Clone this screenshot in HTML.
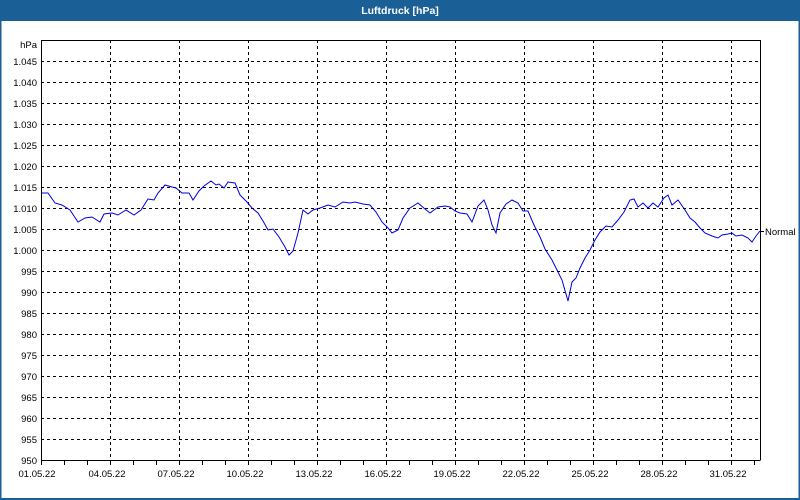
<!DOCTYPE html>
<html><head><style>
html,body{margin:0;padding:0;width:800px;height:500px;overflow:hidden;background:#fff;font-family:"Liberation Sans",sans-serif}
</style></head><body>
<svg width="800" height="500" xmlns="http://www.w3.org/2000/svg" font-family="Liberation Sans, sans-serif" font-size="9.5">
<rect x="0" y="0" width="800" height="500" fill="#fff"/>
<rect x="0" y="0" width="800" height="21" fill="#1b5f97"/>
<rect x="0" y="0" width="1.5" height="500" fill="#1b5f97"/>
<rect x="798.5" y="0" width="1.5" height="500" fill="#1b5f97"/>
<rect x="0" y="498" width="800" height="2" fill="#1b5f97"/>
<text x="400" y="14" fill="#fff" font-weight="bold" font-size="10.5" text-anchor="middle">Luftdruck [hPa]</text>
<g stroke="#000" stroke-width="1" stroke-dasharray="3,3" fill="none">
<path d="M41 61.5H760M41 82.5H760M41 103.5H760M41 124.5H760M41 145.5H760M41 166.5H760M41 187.5H760M41 208.5H760M41 229.5H760M41 250.5H760M41 271.5H760M41 292.5H760M41 313.5H760M41 334.5H760M41 355.5H760M41 376.5H760M41 397.5H760M41 418.5H760M41 439.5H760"/>
<path d="M110.5 40V460M179.5 40V460M248.5 40V460M317.5 40V460M386.5 40V460M455.5 40V460M524.5 40V460M593.5 40V460M662.5 40V460M731.5 40V460"/>
</g>
<g stroke="#000" stroke-width="1" fill="none">
<path d="M41.5 40V465M41 40.5H760.5M760.5 40V460M41 460.5H760.5"/>
<path d="M64.5 460V465M87.5 460V465M110.5 460V465M133.5 460V465M156.5 460V465M179.5 460V465M202.5 460V465M225.5 460V465M248.5 460V465M271.5 460V465M294.5 460V465M317.5 460V465M340.5 460V465M363.5 460V465M386.5 460V465M409.5 460V465M432.5 460V465M455.5 460V465M478.5 460V465M501.5 460V465M524.5 460V465M547.5 460V465M570.5 460V465M593.5 460V465M616.5 460V465M639.5 460V465M662.5 460V465M685.5 460V465M708.5 460V465M731.5 460V465M754.5 460V465"/>
<path d="M760 231.5H764"/>
</g>
<g fill="#000" text-anchor="end">
<text x="37" y="48">hPa</text>
<text x="37" y="65">1.045</text><text x="37" y="86">1.040</text><text x="37" y="107">1.035</text><text x="37" y="128">1.030</text><text x="37" y="149">1.025</text><text x="37" y="170">1.020</text><text x="37" y="191">1.015</text><text x="37" y="212">1.010</text><text x="37" y="233">1.005</text><text x="37" y="254">1.000</text><text x="37" y="275">995</text><text x="37" y="296">990</text><text x="37" y="317">985</text><text x="37" y="338">980</text><text x="37" y="359">975</text><text x="37" y="380">970</text><text x="37" y="401">965</text><text x="37" y="422">960</text><text x="37" y="443">955</text><text x="37" y="464">950</text>
</g>
<g fill="#000" text-anchor="middle">
<text x="37" y="477">01.05.22</text><text x="107" y="477">04.05.22</text><text x="176" y="477">07.05.22</text><text x="245" y="477">10.05.22</text><text x="314" y="477">13.05.22</text><text x="383" y="477">16.05.22</text><text x="452" y="477">19.05.22</text><text x="521" y="477">22.05.22</text><text x="590" y="477">25.05.22</text><text x="659" y="477">28.05.22</text><text x="728" y="477">31.05.22</text>
</g>
<text x="765" y="235" fill="#000">Normal</text>
<polyline fill="none" stroke="#0000e0" stroke-width="1" points="41,193 48,193 55,203 62,205 70,210 78,222 85,218 92,217 100,222 104,214 112,213 118,215 126,210 134,215 141,210 148,199 154,200 158,193 165,185 172,187 176,188 182,193 189,193 193,200 199,191 204,186 211,181 216,185 219,184 224,188 228,182 235,183 240,195 247,202 252,208 258,213 263,221 268,230 273,229 279,237 285,247 289,255 293,251 298,233 303,210 308,214 313,210 320,208 328,205 335,207 343,202 350,203 355,202 363,204 370,205 376,212 382,222 388,228 392,233 398,230 403,218 410,208 418,203 425,209 430,213 438,207 445,206 450,207 455,211 460,213 467,214 472,222 478,206 484,200 488,210 492,225 496,233 500,213 506,204 512,200 518,203 523,211 528,211 534,225 540,237 545,249 552,260 557,270 562,280 568,301 572,282 576,278 580,268 585,258 590,250 595,240 600,232 606,226 612,227 618,220 624,212 630,200 634,199 638,207 643,203 648,208 653,203 658,207 664,198 668,195 672,205 678,200 685,210 690,218 695,222 700,228 705,233 712,236 718,238 722,235 728,234 732,233 736,236 742,235 748,238 752,242 756,236 760,231"/>
</svg>
</body></html>
